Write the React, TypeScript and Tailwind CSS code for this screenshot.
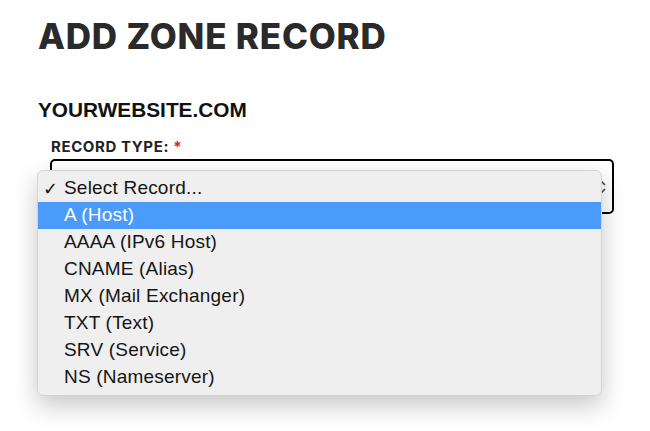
import React from "react";

const options = [
  "A (Host)",
  "AAAA (IPv6 Host)",
  "CNAME (Alias)",
  "MX (Mail Exchanger)",
  "TXT (Text)",
  "SRV (Service)",
  "NS (Nameserver)",
];

export default function App() {
  return (
    <div className="relative w-[650px] h-[431px] bg-white overflow-hidden">
      <div className="pl-[38px] pt-[16px]">
        <h1
          className="text-[35px] leading-[40px] font-extrabold text-[#2a2a2a] tracking-[0.8px]"
          style={{ fontFamily: "Inter, 'Noto Sans', sans-serif" }}
        >
          ADD ZONE RECORD
        </h1>
        <h2
          className="mt-[42px] text-[20.8px] leading-[24px] font-bold text-[#111]"
          style={{ fontFamily: "'Liberation Sans', Arial, sans-serif" }}
        >
          YOURWEBSITE.COM
        </h2>
        <div className="mt-[16px] pl-[13px]">
          <div
            className="text-[15px] leading-[18px] font-bold text-[#222] tracking-[0.6px]"
            style={{ fontFamily: "Inter, 'Noto Sans', sans-serif" }}
          >
            RECORD TYPE: <span className="text-[#e01b1b]">*</span>
          </div>
          <div className="mt-[3px] -ml-[1px] w-[564px] h-[55px] border-2 border-black rounded-[5px] flex items-center justify-end pr-[6px]">
            <svg width="8" height="14" viewBox="0 0 8 14" className="text-[#444]">
              <path d="M1 5 L4 2 L7 5" fill="none" stroke="currentColor" strokeWidth="1.6" />
              <path d="M1 9 L4 12 L7 9" fill="none" stroke="currentColor" strokeWidth="1.6" />
            </svg>
          </div>
        </div>
      </div>

      <div
        className="absolute left-[37px] top-[170px] w-[565px] bg-[#efefef] border border-[#d4d4d4] rounded-[6px] py-[4px] shadow-[0_10px_24px_rgba(0,0,0,0.22)]"
        style={{ fontFamily: "'Liberation Sans', Arial, sans-serif" }}
      >
        <div className="flex items-center h-[27px] text-[19px] tracking-[0.2px] text-[#151515]">
          <span className="w-[26px] pl-[5px] text-[18px] leading-none">✓</span>
          Select Record...
        </div>
        {options.map((o, i) => (
          <div
            key={o}
            className={
              i === 0
                ? "flex items-center h-[27px] pl-[26px] text-[19px] tracking-[0.2px] bg-[#4a9bfa] text-white"
                : "flex items-center h-[27px] pl-[26px] text-[19px] tracking-[0.2px] text-[#151515]"
            }
          >
            {o}
          </div>
        ))}
      </div>
    </div>
  );
}
